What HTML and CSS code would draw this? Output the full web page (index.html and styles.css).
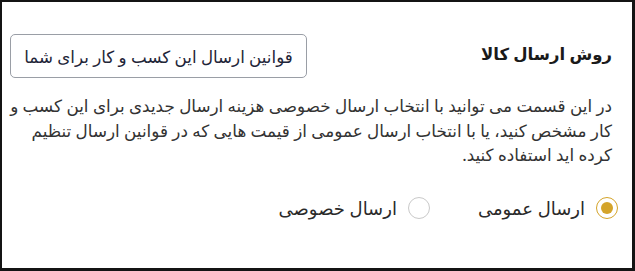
FILE: index.html
```html
<!DOCTYPE html>
<html lang="fa" dir="rtl">
<head>
  <meta charset="UTF-8">
  <meta name="viewport" content="width=device-width, initial-scale=1.0">
  <title>روش ارسال کالا</title>
  <link rel="stylesheet" href="styles.css">
</head>
<body>
  <div class="frame">
    <div class="head">
      <h2 class="title">روش ارسال کالا</h2>
      <button class="btn" type="button">قوانین ارسال این کسب و کار برای شما</button>
    </div>
    <p class="desc">در این قسمت می توانید با انتخاب ارسال خصوصی هزینه ارسال جدیدی برای این کسب و کار مشخص کنید، یا با انتخاب ارسال عمومی از قیمت هایی که در قوانین ارسال تنظیم کرده اید استفاده کنید.</p>
    <div class="options">
      <label class="opt">
        <input type="radio" name="ship" checked>
        <span class="dot"></span>
        <span>ارسال عمومی</span>
      </label>
      <label class="opt">
        <input type="radio" name="ship">
        <span class="dot"></span>
        <span>ارسال خصوصی</span>
      </label>
    </div>
  </div>
</body>
</html>
```

FILE: styles.css
```css
* {margin:0; padding:0; box-sizing:border-box;}
body {background:#fff; font-family:"Noto Sans", "DejaVu Sans", sans-serif; color:#222;}

.frame {width:635px; height:271px; border:2px solid #141414; border-right-width:3px; border-bottom-width:3px; padding:30px 20px 0 4px;}

.head {display:flex; justify-content:space-between; align-items:center; height:48px; padding-left:4px;}
.title {font-size:16.5px; font-weight:700; color:#1a1a1a; margin-top:-6px;}
.btn {width:297px; height:44px; background:#fff; border:1px solid #9a9ea6; border-radius:5px; font-family:inherit; font-size:16.7px; color:#1e2538; cursor:pointer;}

.desc {margin-top:14px; font-size:16.8px; line-height:24.5px; color:#333;}

.options {display:flex; gap:48px; margin:28px -6px 0 0;}
.opt {display:flex; align-items:center; gap:11px; font-size:18px; color:#2a2a2a; cursor:pointer;}
.opt input {display:none;}
.dot {width:22px; height:22px; border-radius:50%; border:1.5px solid #c9c9c9; display:flex; align-items:center; justify-content:center;}
.opt input:checked + .dot {border-color:#d4a42a;}
.opt input:checked + .dot:after {content:''; width:12px; height:12px; border-radius:50%; background:#d4a42a;}
```
